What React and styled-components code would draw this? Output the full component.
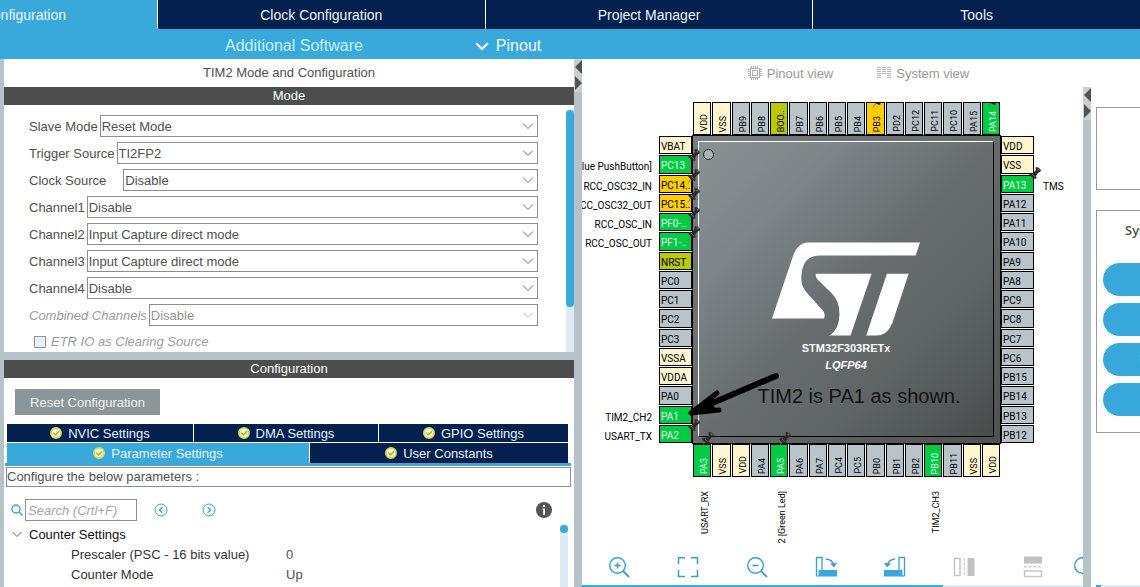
import React from "react";
import styled, { createGlobalStyle, css } from "styled-components";

const blue = "#39a9dc";
const navy = "#03204f";
const rail = "#b5c2c8";
const dark = "#4c4f4e";
const pale = "#ddebf7";

const GlobalStyle = createGlobalStyle`
  *, *::before, *::after { box-sizing: border-box; }
  body { margin: 0; background: #fff; }
  body, button, input, select, table {
    font-family: "Liberation Sans", Arial, sans-serif;
    font-size: 13px;
    color: #505050;
  }
  button { border: 0; padding: 0; background: none; }
  svg { display: block; flex: none; }
`;

const Page = styled.div`
  display: flex;
  flex-direction: column;
  height: 100vh;
  overflow: hidden;
`;

const MainTabs = styled.nav`
  display: grid;
  grid-template-columns: 157px repeat(3, 1fr);
  height: 29px;
  flex: none;
`;

const MainTab = styled.button`
  display: flex;
  align-items: center;
  justify-content: ${(p) => (p.$active ? "flex-end" : "center")};
  padding-right: ${(p) => (p.$active ? "91px" : "0")};
  min-width: 0;
  overflow: hidden;
  white-space: nowrap;
  font-size: 14px;
  color: #eaf6fd;
  background: ${(p) => (p.$active ? blue : navy)};
  border-left: ${(p) => (p.$active ? "0" : "1px solid #fff")};
`;

const SubBar = styled.div`
  display: flex;
  align-items: center;
  gap: 112px;
  height: 30px;
  flex: none;
  padding: 4px 0 0 225px;
  background: ${blue};
`;

const SubBarButton = styled.button`
  display: flex;
  align-items: center;
  gap: 7px;
  font-size: 16px;
  white-space: nowrap;
  color: ${(p) => (p.$soft ? "#c8f0fb" : "#f2fbff")};
`;

const Workspace = styled.main`
  display: grid;
  grid-template-columns: minmax(0, 570fr) 8px minmax(0, 558fr);
  flex: 1;
  min-height: 0;
  border-left: 4px solid ${rail};
`;

const Column = styled.section`
  display: flex;
  flex-direction: column;
  min-width: 0;
  min-height: 0;
`;

const Splitter = styled.div`
  width: 8px;
  flex: none;
  background: ${rail};
`;

const PanelTitle = styled.h1`
  margin: 0;
  font-size: 13px;
  font-weight: 400;
  line-height: 28px;
  text-align: center;
`;

const SectionBar = styled.h2`
  margin: 0;
  font-size: 13px;
  font-weight: 400;
  line-height: 18px;
  flex: none;
  text-align: center;
  color: #fff;
  background: ${dark};
`;

const ModeBody = styled.div`
  display: flex;
  padding-top: 5px;
  border-bottom: 8px solid ${rail};
`;

const ModeForm = styled.form`
  display: flex;
  flex-direction: column;
  gap: 5px;
  flex: 1;
  min-width: 0;
  padding: 5px 28px 0 25px;
`;

const ScrollTrack = styled.div`
  width: 8px;
  flex: none;
  background: ${pale};
`;

const ScrollThumb = styled.div`
  height: ${(p) => p.$length}px;
  border-radius: 4px;
  background: ${blue};
`;

const Field = styled.label`
  display: flex;
  align-items: center;
  gap: ${(p) => (p.$wide ? "17px" : "2px")};
  height: 22px;
  white-space: nowrap;
  color: ${(p) => (p.$off ? "#9b9b9b" : "#505050")};
  font-style: ${(p) => (p.$off ? "italic" : "normal")};
`;

const SelectWrap = styled.span`
  position: relative;
  flex: 1;
  min-width: 0;
`;

const Select = styled.select`
  display: block;
  appearance: none;
  width: 100%;
  height: 22px;
  padding: 0 24px 0 1px;
  border: 1px solid #8e8e8e;
  border-radius: 0;
  background: #fff;
  opacity: 1;
  &:disabled { color: #959595; }
`;

const SelectArrow = styled.svg`
  position: absolute;
  right: 4px;
  top: 7px;
  pointer-events: none;
`;

const CheckField = styled.label`
  display: flex;
  align-items: center;
  gap: 5px;
  height: 21px;
  padding-left: 5px;
  font-style: italic;
  color: #9b9b9b;
`;

const CheckBox = styled.input`
  appearance: none;
  width: 12px;
  height: 12px;
  margin: 0;
  border: 1px solid #8f979c;
  background: #e9edf4;
`;

const ConfigBody = styled.div`
  display: flex;
  flex-direction: column;
  flex: 1;
  min-height: 0;
  padding: 11px 3px 0 1px;
`;

const ResetButton = styled.button`
  width: 145px;
  height: 26px;
  flex: none;
  margin: 0 0 9px 10px;
  color: #f0f4f4;
  background: #8c9698;
`;

const TabStack = styled.div`
  display: grid;
  gap: 1px;
  padding: 0 3px 0 2px;
  border-bottom: 3px solid #44a5d3;
  flex: none;
`;

const TabLine = styled.div`
  display: grid;
  grid-template-columns: ${(p) => p.$columns};
  gap: 1px;
`;

const ConfigTab = styled.button`
  display: flex;
  align-items: center;
  justify-content: center;
  gap: 6px;
  height: ${(p) => (p.$tall ? 20 : 18)}px;
  color: #e6f4fb;
  background: ${(p) => (p.$active ? blue : navy)};
`;

const Notice = styled.p`
  margin: 1px 0 12px 1px;
  border: 1px solid #8e8e8e;
  line-height: 18px;
  flex: none;
`;

const SearchRow = styled.div`
  display: flex;
  align-items: center;
  flex: none;
  gap: 34px;
  padding: 0 19px 0 6px;
`;

const SearchBox = styled.label`
  display: flex;
  align-items: center;
  gap: 2px;
`;

const SearchInput = styled.input`
  width: 112px;
  height: 22px;
  margin-right: -17px;
  padding: 0 2px;
  border: 1px solid #8e8e8e;
  font-style: italic;
  &::placeholder { color: #a5a5a5; }
`;

const InfoButton = styled.button`
  margin-left: auto;
`;

const ParamArea = styled.div`
  display: flex;
  flex: 1;
  min-height: 0;
  overflow: hidden;
  padding: 4px 3px 0 7px;
`;

const ParamContent = styled.div`
  flex: 1;
`;

const GroupButton = styled.button`
  display: flex;
  align-items: center;
  gap: 7px;
  height: 19px;
  color: #111;
`;

const ParamTable = styled.table`
  border-collapse: collapse;
  margin-left: 59px;
  th, td {
    height: 20px;
    padding: 0;
    text-align: left;
    font-weight: 400;
    white-space: nowrap;
  }
  th { width: 215px; color: #333; }
`;

const ViewTabs = styled.div`
  display: flex;
  align-items: center;
  justify-content: center;
  gap: 44px;
  height: 28px;
  flex: none;
  padding-right: 5px;
`;

const ViewTab = styled.button`
  display: flex;
  align-items: center;
  gap: 5px;
  color: #999;
`;

const PinoutArea = styled.div`
  display: flex;
  flex: 1;
  min-height: 0;
`;

const CanvasColumn = styled.div`
  display: flex;
  flex-direction: column;
  flex: 1;
  min-width: 0;
`;

const Canvas = styled.div`
  display: flex;
  justify-content: center;
  flex: 1;
  min-height: 0;
  overflow: hidden;
  padding: 15px 0 0 28px;
`;

const Chip = styled.div`
  position: relative;
  display: grid;
  grid-template-columns: 33px 309px 33px;
  grid-template-rows: 33px 309px 33px;
  height: 375px;
  flex: none;
`;

const sides = {
  top: css`grid-area: 1 / 2; grid-auto-flow: column; grid-auto-columns: 1fr; padding: 0 1px;`,
  bottom: css`grid-area: 3 / 2; grid-auto-flow: column; grid-auto-columns: 1fr; padding: 0 1px;`,
  left: css`grid-area: 2 / 1; grid-auto-rows: 1fr; padding: 1px 0;`,
  right: css`grid-area: 2 / 3; grid-auto-rows: 1fr; padding: 1px 0;`,
};

const PinBank = styled.div`
  display: grid;
  gap: 1px;
  ${(p) => sides[p.$side]}
`;

const pinColors = {
  free: "#b8c3ca",
  power: "#fff6d0",
  used: "#00cb45",
  system: "#ffcd00",
  boot: "#bac900",
};

const vertical = css`
  writing-mode: vertical-rl;
  transform: rotate(180deg);
`;

const PinCell = styled.div`
  position: relative;
  display: flex;
  align-items: ${(p) => (p.$vertical ? "flex-end" : "center")};
  justify-content: ${(p) => (p.$vertical ? "center" : "flex-start")};
  min-height: 0;
  min-width: 0;
  overflow: ${(p) => (p.$side === "top" ? "hidden" : "visible")};
  border: 1px solid #000;
  background: ${(p) => pinColors[p.$kind]};
  color: ${(p) => (p.$kind === "used" ? "#e4ffe9" : "#000")};
`;

const PinName = styled.span`
  font-family: Roboto, "Liberation Sans", sans-serif;
  font-size: ${(p) => (p.$vertical ? 9 : 10)}px;
  line-height: 12px;
  white-space: nowrap;
  padding: ${(p) => (p.$vertical ? "2px 4px 0 0" : "4px 0 0 1px")};
  ${(p) => p.$vertical && vertical}
`;

const tagSides = {
  left: css`right: 100%; top: 4px; margin-right: 8px;`,
  right: css`left: 100%; top: 4px; margin-left: 10px;`,
  bottom: css`top: 100%; left: 4px; margin-top: 15px; ${vertical}`,
};

const PinTag = styled.span`
  position: absolute;
  font-family: Roboto, "Liberation Sans", sans-serif;
  font-size: ${(p) => (p.$side === "bottom" ? 9 : 10)}px;
  line-height: 14px;
  white-space: nowrap;
  color: #000;
  ${(p) => tagSides[p.$side]}
`;

const pushPinSides = {
  top: css`top: -11px; right: -2px;`,
  left: css`top: -8px; right: -10px;`,
  right: css`top: -10px; right: -9px;`,
  bottom: css`top: -14px; right: -5px;`,
};

const PushPin = styled.svg`
  position: absolute;
  z-index: 1;
  ${(p) => pushPinSides[p.$side]}
`;

const ChipBody = styled.div`
  grid-area: 2 / 2;
  padding: 5px 6px 6px 5px;
  border: 1px solid #000;
  background: linear-gradient(135deg, #777e80, #666b6c 50%, #4e5251);
`;

const ChipFace = styled.div`
  display: flex;
  flex-direction: column;
  align-items: center;
  height: 100%;
  padding-top: 7px;
  border: 1px solid #fff;
  border-right-color: #000;
  border-bottom-color: #000;
  background: linear-gradient(135deg, #899293, #7c8488 25%, #686e6f 50%, #5f6565 72%, #484d4c);
`;

const PinOneMark = styled.span`
  align-self: flex-start;
  width: 11px;
  height: 11px;
  margin-left: 4px;
  border: 1px solid #222;
  border-radius: 50%;
  background: #a9b2b9;
`;

const LogoBox = styled.div`
  padding: 82px 0 4px;
`;

const ChipName = styled.strong`
  font-size: 11px;
  line-height: 17px;
  color: #fff;
  font-style: ${(p) => (p.$italic ? "italic" : "normal")};
`;

const Annotation = styled.span`
  padding: 10px 0 0 26px;
  font-size: 20px;
  line-height: 24px;
  white-space: nowrap;
  color: #111;
`;

const Arrow = styled.svg`
  position: absolute;
  z-index: 2;
  left: 25px;
  top: 268px;
`;

const ToolBar = styled.div`
  display: flex;
  gap: 29px;
  height: 42px;
  flex: none;
  overflow: hidden;
  padding: 13px 0 0 26px;
`;

const ToolGroup = styled.div`
  display: flex;
  align-items: flex-start;
  gap: 47px;
`;

const ScrollLine = styled.div`
  height: 2px;
  flex: none;
  background: linear-gradient(90deg, ${blue} ${(p) => p.$filled}, ${pale} 0);
`;

const SideColumn = styled.aside`
  display: flex;
  flex-direction: column;
  width: 49px;
  flex: none;
  overflow: hidden;
  padding: 20px 0 0 5px;
`;

const SideBox = styled.div`
  display: flex;
  flex-direction: column;
  gap: 7px;
  width: 122px;
  flex: none;
  min-height: 83px;
  margin-bottom: 20px;
  padding: 6px 6px 16px;
  border: 1px solid #999;
`;

const SideTitle = styled.h3`
  margin: 0;
  padding: 3px 0 16px 22px;
  font-family: "Open Sans", "Noto Sans", sans-serif;
  font-size: 13px;
  font-weight: 600;
  line-height: 20px;
  white-space: nowrap;
`;

const SideButton = styled.button`
  height: 33px;
  flex: none;
  border-radius: 17px;
  font-weight: 700;
  color: #fff;
  background: ${blue};
`;

const SideFill = styled.div`
  flex: 1;
`;

const Chevron = ({ size = 10, color = "#666", width = 1 }) => (
  <svg width={size} height={size / 2 + 2} viewBox="0 0 10 7" fill="none" stroke={color} strokeWidth={width}>
    <path d="M0.5 1 L5 5.5 L9.5 1" />
  </svg>
);

const SplitArrows = () => (
  <svg width="8" height="33" viewBox="0 0 8 33">
    <rect width="8" height="33" fill="#cbd0cf" />
    <path d="M8 1 L1 8 L8 15Z M1 17 L8 24 L1 31Z" fill="#505352" />
  </svg>
);

const CheckBadge = () => (
  <svg width="12" height="12" viewBox="0 0 12 12">
    <circle cx="6" cy="6" r="5" fill="#fbfbd2" stroke="#cddc62" strokeWidth="2" />
    <path d="M3.2 5.8 L5.4 8 L9 4.2" fill="none" stroke="#b3a72a" strokeWidth="1.5" />
  </svg>
);

const CircleArrow = ({ back }) => (
  <svg width="14" height="14" viewBox="0 0 14 14" fill="none" stroke="#3fa3cf">
    <circle cx="7" cy="7" r="6" />
    <path d={back ? "M8.3 4.3 L5.5 7 L8.3 9.7" : "M5.7 4.3 L8.5 7 L5.7 9.7"} strokeWidth="1.4" />
  </svg>
);

const Lens = ({ sign }) => (
  <svg width="22" height="22" viewBox="0 0 22 22" fill="none" stroke="#3d9ecb" strokeWidth="1.4">
    <circle cx="9.5" cy="9.5" r="7.8" />
    <path d="M15 15 L21 21" strokeWidth="1.8" />
    {sign && <path d="M6.5 9.5 H12.5" strokeWidth="1.6" />}
    {sign === "+" && <path d="M9.5 6.5 V12.5" strokeWidth="1.6" />}
  </svg>
);

const FitIcon = () => (
  <svg width="22" height="22" viewBox="0 0 22 22" fill="none" stroke="#3d9ecb" strokeWidth="1.5">
    <path d="M1.5 8 V1.8 H8 M14 1.8 H20.5 V8 M20.5 14 V20.5 H14 M8 20.5 H1.5 V14" />
  </svg>
);

const RotateIcon = ({ left }) => (
  <svg width="22" height="22" viewBox="0 0 22 22" fill="none" stroke="#3d9ecb">
    <g transform={left ? "matrix(-1 0 0 1 22 0)" : undefined}>
      <path d="M1.5 20 V1.5 H7 V14" strokeWidth="1.3" />
      <path d="M1.5 20 H4" strokeWidth="1.3" />
      <rect x="3.5" y="14" width="18.5" height="6.5" fill={blue} stroke="none" />
      <path d="M11 3 C15.5 3.5 18 5.5 18.5 9" strokeWidth="1.4" />
      <path d="M15 7.5 L22 7 L19 11.5Z" fill="#3d9ecb" stroke="none" />
    </g>
  </svg>
);

const MirrorIcon = ({ flip }) => (
  <svg width="22" height="22" viewBox="0 0 22 22">
    <g transform={flip ? "matrix(0 -1 1 0 0 22)" : undefined}>
      <rect x="1.5" y="2.5" width="5.5" height="17" fill="none" stroke="#c4c4c4" strokeWidth="1.4" />
      <path d="M11.2 2 V20" stroke="#bdbdbd" strokeDasharray="3 1.6" />
      <rect x="14.5" y="2" width="7" height="18" fill="#c2c2c2" />
    </g>
  </svg>
);

const ChipIcon = () => (
  <svg width="14" height="14" viewBox="0 0 14 14" fill="none" stroke="#b0b0b0">
    <rect x="2.5" y="2.5" width="9" height="9" />
    <rect x="4.5" y="4.5" width="5" height="5" />
    <path d="M3.5 0 V2 M5.5 0 V2 M7.5 0 V2 M9.5 0 V2 M3.5 12 V14 M5.5 12 V14 M7.5 12 V14 M9.5 12 V14 M0 3.5 H2 M0 5.5 H2 M0 7.5 H2 M0 9.5 H2 M12 3.5 H14 M12 5.5 H14 M12 7.5 H14 M12 9.5 H14" />
  </svg>
);

const SystemIcon = () => (
  <svg width="14" height="14" viewBox="0 0 14 14" stroke="#b3b3b3">
    <path d="M0 1.5 H4 M0 3.5 H4 M0 5.5 H4 M0 7.5 H4 M0 9.5 H4 M0 11.5 H4 M5 1.5 H9 M5 3.5 H9 M5 5.5 H9 M5 7.5 H9 M10 1.5 H14 M10 3.5 H14 M10 5.5 H14 M10 7.5 H14 M10 9.5 H14 M10 11.5 H14" />
  </svg>
);

const Logo = () => (
  <svg width="148" height="94" viewBox="98 65 443 281" fill="#fff" aria-label="ST">
    <path d="M98 294 L160 110 Q174 66 206 66 L541 66 L528 105 L240 105 C200 107 186 130 186 180 Q187 200 205 220 L252 272 Q258 282 254 294Z" />
    <path d="M229 160 L396 160 L333 345 L270 345 Q300 325 300 280 Q300 240 275 217 L235 178 Q227 168 229 160Z" />
    <path d="M442 160 L507 160 L458 308 Q443 345 410 345 L380 345Z" />
  </svg>
);

const mode = [
  { label: "Slave Mode", value: "Reset Mode" },
  { label: "Trigger Source", value: "TI2FP2" },
  { label: "Clock Source", value: "Disable", wide: true },
  { label: "Channel1", value: "Disable" },
  { label: "Channel2", value: "Input Capture direct mode" },
  { label: "Channel3", value: "Input Capture direct mode" },
  { label: "Channel4", value: "Disable" },
  { label: "Combined Channels", value: "Disable", off: true },
];

// Each pin: name, kind, signal label, whether it is locked with a push pin.
const banks = {
  top: [
    ["VDD", "power"], ["VSS", "power"], ["PB9"], ["PB8"], ["BOO..", "boot"], ["PB7"], ["PB6"], ["PB5"],
    ["PB4"], ["PB3", "system", "", true], ["PD2"], ["PC12"], ["PC11"], ["PC10"], ["PA15"], ["PA14", "used", "", true],
  ],
  left: [
    ["VBAT", "power"], ["PC13", "used", "B1 [Blue PushButton]", true], ["PC14..", "system", "RCC_OSC32_IN", true],
    ["PC15..", "system", "RCC_OSC32_OUT", true], ["PF0-..", "used", "RCC_OSC_IN", true],
    ["PF1-..", "used", "RCC_OSC_OUT", true], ["NRST", "boot"], ["PC0"], ["PC1"], ["PC2"], ["PC3"],
    ["VSSA", "power"], ["VDDA", "power"], ["PA0"], ["PA1", "used", "TIM2_CH2"], ["PA2", "used", "USART_TX", true],
  ],
  right: [
    ["VDD", "power"], ["VSS", "power"], ["PA13", "used", "TMS", true], ["PA12"], ["PA11"], ["PA10"], ["PA9"],
    ["PA8"], ["PC9"], ["PC8"], ["PC7"], ["PC6"], ["PB15"], ["PB14"], ["PB13"], ["PB12"],
  ],
  bottom: [
    ["PA3", "used", "USART_RX", true], ["VSS", "power"], ["VDD", "power"], ["PA4"],
    ["PA5", "used", "LD2 [Green Led]", true], ["PA6"], ["PA7"], ["PC4"], ["PC5"], ["PB0"], ["PB1"], ["PB2"],
    ["PB10", "used", "TIM2_CH3"], ["PB11"], ["VSS", "power"], ["VDD", "power"],
  ],
};

const Bank = ({ side }) => {
  const isVertical = side === "top" || side === "bottom";
  return (
    <PinBank $side={side}>
      {banks[side].map(([name, kind = "free", tag, locked], i) => (
        <PinCell key={i} $kind={kind} $side={side} $vertical={isVertical}>
          <PinName $vertical={isVertical}>{name}</PinName>
          {tag && <PinTag $side={side}>{tag}</PinTag>}
          {locked && (
            <PushPin $side={side} width="14" height="16" viewBox="0 0 14 16">
              <path d="M1 15 L5 10" stroke="#777" />
              <path d="M1 8 Q3 6 5 7 L8 4 Q7 2 8 1 Q11 1 13 4 Q13 6 10 7 L8 10 Q9 12 8 13 Q3 12 1 8Z" fill="#2b2b2b" />
              <path d="M4 8 L7 11" stroke="#666" />
              <circle cx="10.5" cy="3.5" r="1" fill="#6d6d6d" />
            </PushPin>
          )}
        </PinCell>
      ))}
    </PinBank>
  );
};

export default function App() {
  return (
    <Page>
      <GlobalStyle />
      <MainTabs>
        <MainTab $active>Pinout &amp; Configuration</MainTab>
        <MainTab>Clock Configuration</MainTab>
        <MainTab>Project Manager</MainTab>
        <MainTab>Tools</MainTab>
      </MainTabs>
      <SubBar>
        <SubBarButton $soft>Additional Software</SubBarButton>
        <SubBarButton>
          <Chevron size={14} color="#fff" width={1.6} />
          Pinout
        </SubBarButton>
      </SubBar>

      <Workspace>
        <Column>
          <PanelTitle>TIM2 Mode and Configuration</PanelTitle>
          <SectionBar>Mode</SectionBar>
          <ModeBody>
            <ModeForm>
              {mode.map((f) => (
                <Field key={f.label} $wide={f.wide} $off={f.off}>
                  {f.label}
                  <SelectWrap>
                    <Select disabled={f.off} defaultValue={f.value}>
                      <option>{f.value}</option>
                    </Select>
                    <SelectArrow width="12" height="8" viewBox="0 0 12 8" fill="none" stroke={f.off ? "#bbb" : "#707070"}>
                      <path d="M1 1.5 L6 6.5 L11 1.5" />
                    </SelectArrow>
                  </SelectWrap>
                </Field>
              ))}
              <CheckField>
                <CheckBox type="checkbox" disabled />
                ETR IO as Clearing Source
              </CheckField>
            </ModeForm>
            <ScrollTrack>
              <ScrollThumb $length={197} />
            </ScrollTrack>
          </ModeBody>

          <SectionBar>Configuration</SectionBar>
          <ConfigBody>
            <ResetButton>Reset Configuration</ResetButton>
            <TabStack>
              <TabLine $columns="186fr 184fr 189fr">
                <ConfigTab><CheckBadge />NVIC Settings</ConfigTab>
                <ConfigTab><CheckBadge />DMA Settings</ConfigTab>
                <ConfigTab><CheckBadge />GPIO Settings</ConfigTab>
              </TabLine>
              <TabLine $columns="302fr 258fr">
                <ConfigTab $tall $active><CheckBadge />Parameter Settings</ConfigTab>
                <ConfigTab $tall><CheckBadge />User Constants</ConfigTab>
              </TabLine>
            </TabStack>
            <Notice>Configure the below parameters :</Notice>
            <SearchRow>
              <SearchBox>
                <svg width="12" height="12" viewBox="0 0 12 12" fill="none" stroke="#3fa3cf" strokeWidth="1.4">
                  <circle cx="5" cy="5" r="4" />
                  <path d="M8 8 L11.5 11.5" />
                </svg>
                <SearchInput placeholder="Search (Crtl+F)" aria-label="Search" />
              </SearchBox>
              <button aria-label="Previous"><CircleArrow back /></button>
              <button aria-label="Next"><CircleArrow /></button>
              <InfoButton aria-label="Information">
                <svg width="16" height="16" viewBox="0 0 16 16">
                  <circle cx="8" cy="8" r="8" fill="#555" />
                  <path d="M7 3 H9 V5 H7Z M6.5 6.5 H9 V13 H7.2 V7.5 H6.5Z" fill="#fff" />
                </svg>
              </InfoButton>
            </SearchRow>
            <ParamArea>
              <ParamContent>
                <GroupButton><Chevron />Counter Settings</GroupButton>
                <ParamTable>
                  <tbody>
                    <tr><th scope="row">Prescaler (PSC - 16 bits value)</th><td>0</td></tr>
                    <tr><th scope="row">Counter Mode</th><td>Up</td></tr>
                  </tbody>
                </ParamTable>
              </ParamContent>
              <ScrollTrack>
                <ScrollThumb $length={8} />
              </ScrollTrack>
            </ParamArea>
          </ConfigBody>
        </Column>

        <Splitter><SplitArrows /></Splitter>

        <Column>
          <ViewTabs>
            <ViewTab><ChipIcon />Pinout view</ViewTab>
            <ViewTab><SystemIcon />System view</ViewTab>
          </ViewTabs>
          <PinoutArea>
            <CanvasColumn>
              <Canvas>
                <Chip>
                  <ChipBody>
                    <ChipFace>
                      <PinOneMark />
                      <LogoBox><Logo /></LogoBox>
                      <ChipName>STM32F303RETx</ChipName>
                      <ChipName $italic>LQFP64</ChipName>
                      <Annotation>TIM2 is PA1 as shown.</Annotation>
                    </ChipFace>
                  </ChipBody>
                  <Bank side="top" />
                  <Bank side="left" />
                  <Bank side="right" />
                  <Bank side="bottom" />
                  <Arrow width="98" height="48" viewBox="0 0 98 48" fill="none" stroke="#000">
                    <path d="M92 6 L12 40" strokeWidth="6" strokeLinecap="round" />
                    <path d="M33 23 L7 43 L35 40" strokeWidth="5" strokeLinecap="round" strokeLinejoin="round" />
                    <path d="M30 26 L7 43 L33 40 L28 34Z" fill="#000" stroke="none" />
                  </Arrow>
                </Chip>
              </Canvas>
              <ToolBar>
                <ToolGroup>
                  <button aria-label="Zoom in"><Lens sign="+" /></button>
                  <button aria-label="Best fit"><FitIcon /></button>
                  <button aria-label="Zoom out"><Lens sign="-" /></button>
                  <button aria-label="Rotate right"><RotateIcon /></button>
                  <button aria-label="Rotate left"><RotateIcon left /></button>
                  <button aria-label="Mirror" disabled><MirrorIcon /></button>
                  <button aria-label="Flip" disabled><MirrorIcon flip /></button>
                </ToolGroup>
                <Lens />
              </ToolBar>
              <ScrollLine $filled="72%" />
            </CanvasColumn>
            <Splitter><SplitArrows /></Splitter>
            <SideColumn>
              <SideBox />
              <SideBox>
                <SideTitle>System Core</SideTitle>
                <SideButton>DMA</SideButton>
                <SideButton>GPIO</SideButton>
                <SideButton>IWDG</SideButton>
                <SideButton>NVIC</SideButton>
              </SideBox>
              <SideFill />
              <ScrollLine $filled="5px" />
            </SideColumn>
          </PinoutArea>
        </Column>
      </Workspace>
    </Page>
  );
}
